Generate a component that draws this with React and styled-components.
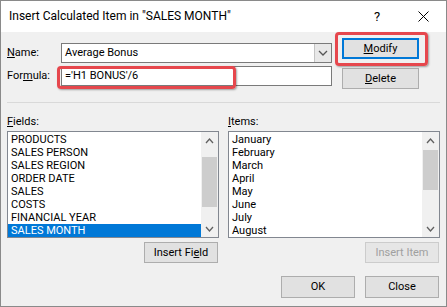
import React from "react";
import styled, { createGlobalStyle } from "styled-components";

const GlobalStyle = createGlobalStyle`
  html, body {
    margin: 0;
    padding: 0;
    background: #ffffff;
  }
  body {
    font-family: "Segoe UI", Roboto, "Noto Sans", sans-serif;
    font-size: 11px;
    color: #000000;
  }
  u {
    text-underline-offset: 1px;
  }
`;

const Window = styled.div`
  width: 447px;
  height: 307px;
  box-sizing: border-box;
  border: 1px solid #8a8a8a;
  display: flex;
  flex-direction: column;
  background: #f0f0f0;
  overflow: hidden;
`;

const TitleBar = styled.div`
  height: 31px;
  flex: none;
  display: flex;
  align-items: center;
  background: #ffffff;
  padding-left: 8px;
`;

const Title = styled.div`
  flex: 1;
  font-size: 12px;
  line-height: 16px;
  margin-top: -2px;
`;

const TitleButton = styled.div`
  width: 46px;
  height: 31px;
  display: flex;
  align-items: center;
  justify-content: center;
  font-size: 13px;
`;

const Body = styled.div`
  flex: 1;
  padding: 6px 6px 0;
  display: flex;
  flex-direction: column;
`;

const Top = styled.div`
  display: flex;
  align-items: flex-start;
`;

const FieldGrid = styled.div`
  margin-top: 5px;
  display: flex;
  flex-direction: column;
  gap: 3px;
`;

const FieldRow = styled.div`
  display: flex;
  align-items: center;
  height: 20px;
`;

const Label = styled.div`
  width: 54px;
  line-height: 14px;
`;

const Combo = styled.div`
  width: 271px;
  height: 20px;
  box-sizing: border-box;
  border: 1px solid #7a7a7a;
  background: #ffffff;
  display: flex;
`;

const FieldText = styled.div`
  flex: 1;
  padding-left: 3px;
  line-height: 18px;
`;

const DropButton = styled.div`
  width: 16px;
  border-left: 1px solid #c4c4c4;
  background: #e8e8e8;
  display: flex;
  align-items: center;
  justify-content: center;
`;

const InputWrap = styled.div`
  position: relative;
`;

const TextBox = styled.div`
  width: 271px;
  height: 20px;
  box-sizing: border-box;
  border: 1px solid #7a7a7a;
  background: #ffffff;
  padding-left: 3px;
  line-height: 18px;
`;

const Highlight = styled.div`
  position: absolute;
  left: ${(p) => p.$left}px;
  top: ${(p) => p.$top}px;
  width: ${(p) => p.$width}px;
  height: ${(p) => p.$height}px;
  box-sizing: border-box;
  border: 3px solid #e6474d;
  border-radius: 4px;
  box-shadow: 1px 1px 2px rgba(0, 0, 0, 0.35);
  pointer-events: none;
`;

const ButtonStack = styled.div`
  margin-left: 10px;
  display: flex;
  flex-direction: column;
  gap: 9px;
`;

const ButtonWrap = styled.div`
  position: relative;
`;

const Button = styled.div`
  width: ${(p) => p.$width || 74}px;
  height: ${(p) => p.$height || 21}px;
  box-sizing: border-box;
  border-style: solid;
  border-width: ${(p) => (p.$default ? 2 : 1)}px;
  border-color: ${(p) => (p.$disabled ? "#cccccc" : p.$default ? "#0078d7" : "#adadad")};
  background: ${(p) => (p.$disabled ? "#e6e6e6" : "#e1e1e1")};
  color: ${(p) => (p.$disabled ? "#a0a0a0" : "#000000")};
  display: flex;
  align-items: center;
  justify-content: center;
  line-height: 14px;
`;

const Separator = styled.div`
  margin-top: 13px;
  height: 1px;
  background: #d9d9d9;
`;

const Lists = styled.div`
  margin-top: 12px;
  display: grid;
  grid-template-columns: 212px 212px;
  column-gap: 9px;
`;

const Column = styled.div`
  display: flex;
  flex-direction: column;
`;

const ListLabel = styled.div`
  line-height: 14px;
  margin-bottom: 2px;
`;

const ListBox = styled.div`
  height: 107px;
  box-sizing: border-box;
  border: 1px solid #828790;
  background: #ffffff;
  display: flex;
`;

const Rows = styled.div`
  flex: 1;
  padding-top: 1px;
  overflow: hidden;
`;

const Row = styled.div`
  height: 13px;
  line-height: 13px;
  padding-left: 3px;
  white-space: nowrap;
  background: ${(p) => (p.$selected ? "#0078d7" : "transparent")};
  color: ${(p) => (p.$selected ? "#ffffff" : "#000000")};
`;

const ScrollBar = styled.div`
  width: 17px;
  background: #f0f0f0;
  position: relative;
  display: flex;
  flex-direction: column;
  justify-content: space-between;
`;

const Arrow = styled.div`
  height: 17px;
  display: flex;
  align-items: center;
  justify-content: center;
`;

const Thumb = styled.div`
  position: absolute;
  left: 1px;
  right: 1px;
  top: ${(p) => p.$top}px;
  height: ${(p) => p.$height}px;
  background: #cdcdcd;
`;

const ButtonRow = styled.div`
  display: flex;
  justify-content: flex-end;
  gap: 10px;
  margin-top: ${(p) => p.$mt}px;
  padding-right: 1px;
`;

const Chevron = ({ up, color = "#606060", w = 7, h = 4 }) => (
  <svg width={w + 2} height={h + 2} viewBox={`0 0 ${w + 2} ${h + 2}`}>
    <polyline
      points={
        up
          ? `1,${h + 1} ${(w + 2) / 2},1 ${w + 1},${h + 1}`
          : `1,1 ${(w + 2) / 2},${h + 1} ${w + 1},1`
      }
      fill="none"
      stroke={color}
      strokeWidth="1.3"
    />
  </svg>
);

const CloseIcon = () => (
  <svg width="11" height="11" viewBox="0 0 11 11">
    <path d="M0.5 0.5 L10.5 10.5 M10.5 0.5 L0.5 10.5" stroke="#000" strokeWidth="1" />
  </svg>
);

const fields = [
  "PRODUCTS",
  "SALES PERSON",
  "SALES REGION",
  "ORDER DATE",
  "SALES",
  "COSTS",
  "FINANCIAL YEAR",
  "SALES MONTH",
];

const items = ["January", "February", "March", "April", "May", "June", "July", "August"];

function List({ rows, selected, thumbTop, thumbHeight }) {
  return (
    <ListBox>
      <Rows>
        {rows.map((r) => (
          <Row key={r} $selected={r === selected}>
            {r}
          </Row>
        ))}
      </Rows>
      <ScrollBar>
        <Arrow>
          <Chevron up />
        </Arrow>
        <Thumb $top={thumbTop} $height={thumbHeight} />
        <Arrow>
          <Chevron />
        </Arrow>
      </ScrollBar>
    </ListBox>
  );
}

export default function App() {
  return (
    <>
      <GlobalStyle />
      <Window>
        <TitleBar>
          <Title>Insert Calculated Item in "SALES MONTH"</Title>
          <TitleButton>?</TitleButton>
          <TitleButton>
            <CloseIcon />
          </TitleButton>
        </TitleBar>
        <Body>
          <Top>
            <FieldGrid>
              <FieldRow>
                <Label>
                  <u>N</u>ame:
                </Label>
                <Combo>
                  <FieldText>Average Bonus</FieldText>
                  <DropButton>
                    <Chevron w={8} h={4} color="#555" />
                  </DropButton>
                </Combo>
              </FieldRow>
              <FieldRow>
                <Label>
                  For<u>m</u>ula:
                </Label>
                <InputWrap>
                  <TextBox>='H1 BONUS'/6</TextBox>
                  <Highlight $left={-4} $top={0} $width={179} $height={23} />
                </InputWrap>
              </FieldRow>
            </FieldGrid>
            <ButtonStack>
              <ButtonWrap>
                <Button $default $width={77}>
                  <span>
                    <u>M</u>odify
                  </span>
                </Button>
                <Highlight $left={-7} $top={-6} $width={93} $height={34} />
              </ButtonWrap>
              <Button $width={77}>
                <span>
                  <u>D</u>elete
                </span>
              </Button>
            </ButtonStack>
          </Top>
          <Separator />
          <Lists>
            <Column>
              <ListLabel>
                <u>F</u>ields:
              </ListLabel>
              <List rows={fields} selected="SALES MONTH" thumbTop={25} thumbHeight={50} />
              <ButtonRow $mt={4}>
                <Button>
                  <span>
                    Insert Fi<u>e</u>ld
                  </span>
                </Button>
              </ButtonRow>
            </Column>
            <Column>
              <ListLabel>
                <u>I</u>tems:
              </ListLabel>
              <List rows={items} thumbTop={18} thumbHeight={40} />
              <ButtonRow $mt={4}>
                <Button $disabled>Insert Item</Button>
              </ButtonRow>
            </Column>
          </Lists>
          <ButtonRow $mt={13}>
            <Button $height={22}>OK</Button>
            <Button $height={22}>Close</Button>
          </ButtonRow>
        </Body>
      </Window>
    </>
  );
}
